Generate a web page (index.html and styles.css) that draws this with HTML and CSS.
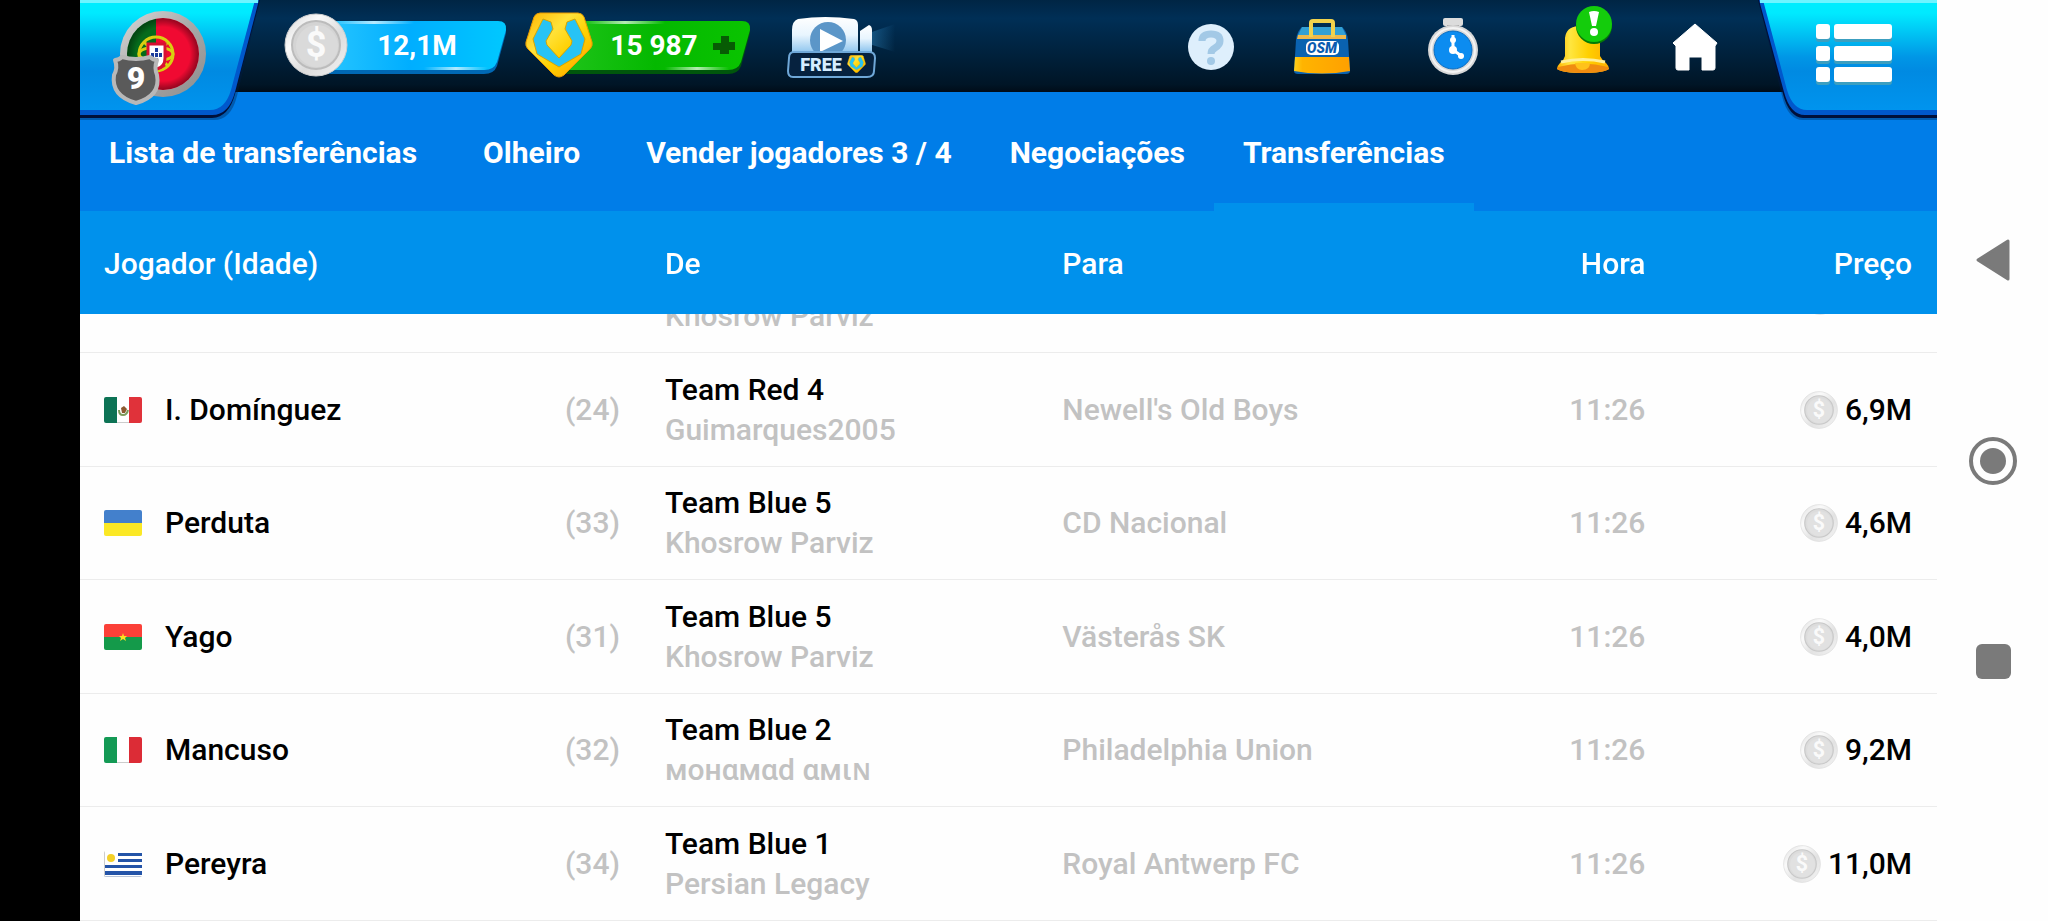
FILE: index.html
```html
<!DOCTYPE html>
<html lang="pt">
<head>
    <meta charset="UTF-8">
    <meta name="viewport" content="width=device-width, initial-scale=1.0">
    <title>Transferências</title>
    <link rel="stylesheet" href="styles.css">
</head>
<body>

    <!-- Gradientes e símbolos partilhados -->
    <svg class="defs" width="0" height="0" aria-hidden="true">
        <defs>
            <linearGradient id="plate" x1="0" y1="0" x2="0" y2="1">
                <stop offset="0" stop-color="#00eeff"/>
                <stop offset="0.12" stop-color="#00eaff"/>
                <stop offset="0.52" stop-color="#0096e6"/>
                <stop offset="0.65" stop-color="#008ae2"/>
                <stop offset="1" stop-color="#0094ee"/>
            </linearGradient>
            <linearGradient id="silver" x1="0" y1="0" x2="1" y2="1">
                <stop offset="0" stop-color="#d8d8d8"/>
                <stop offset="0.5" stop-color="#a8a8a8"/>
                <stop offset="1" stop-color="#8c8c8c"/>
            </linearGradient>
            <linearGradient id="coin-rim" x1="0" y1="0" x2="1" y2="1">
                <stop offset="0" stop-color="#d6d6d6"/>
                <stop offset="0.3" stop-color="#fafafa"/>
                <stop offset="0.6" stop-color="#dcdcdc"/>
                <stop offset="1" stop-color="#f4f4f4"/>
            </linearGradient>
            <linearGradient id="blue-pill" x1="0" y1="0" x2="1" y2="0">
                <stop offset="0" stop-color="#2cc8ff"/>
                <stop offset="0.5" stop-color="#00aeff"/>
                <stop offset="1" stop-color="#00c8ff"/>
            </linearGradient>
            <linearGradient id="green-pill" x1="0" y1="0" x2="1" y2="0">
                <stop offset="0" stop-color="#1fc41a"/>
                <stop offset="0.5" stop-color="#04b800"/>
                <stop offset="1" stop-color="#0ac400"/>
            </linearGradient>
            <linearGradient id="shine" x1="0" y1="0" x2="1" y2="0">
                <stop offset="0" stop-color="#ffffff" stop-opacity="0"/>
                <stop offset="0.5" stop-color="#ffffff" stop-opacity="0.7"/>
                <stop offset="1" stop-color="#ffffff" stop-opacity="0"/>
            </linearGradient>
            <linearGradient id="gold" x1="0" y1="0" x2="1" y2="1">
                <stop offset="0" stop-color="#ffb400"/>
                <stop offset="0.35" stop-color="#ffe23a"/>
                <stop offset="0.6" stop-color="#ffd000"/>
                <stop offset="1" stop-color="#ff9c00"/>
            </linearGradient>
            <linearGradient id="camera" x1="0" y1="0" x2="0" y2="1">
                <stop offset="0" stop-color="#ffffff"/>
                <stop offset="0.5" stop-color="#e8f5fe"/>
                <stop offset="1" stop-color="#8cc4ee"/>
            </linearGradient>
            <linearGradient id="beam" x1="0" y1="0" x2="1" y2="0">
                <stop offset="0" stop-color="#3aa0e0" stop-opacity="0.4"/>
                <stop offset="1" stop-color="#3aa0e0" stop-opacity="0"/>
            </linearGradient>
            <linearGradient id="bag-base" x1="0" y1="0" x2="1" y2="0">
                <stop offset="0" stop-color="#ffcf1a"/>
                <stop offset="0.15" stop-color="#ffb400"/>
                <stop offset="1" stop-color="#ffa000"/>
            </linearGradient>
            <linearGradient id="bell" x1="0" y1="0" x2="1" y2="0">
                <stop offset="0" stop-color="#ffb600"/>
                <stop offset="0.25" stop-color="#ffe640"/>
                <stop offset="0.6" stop-color="#ffd000"/>
                <stop offset="1" stop-color="#ffae00"/>
            </linearGradient>
            <radialGradient id="flag-shade">
                <stop offset="0.75" stop-color="#000000" stop-opacity="0"/>
                <stop offset="1" stop-color="#000000" stop-opacity="0.4"/>
            </radialGradient>
            <clipPath id="crest-clip"><circle cx="83" cy="54" r="36"/></clipPath>
            <clipPath id="flag-clip"><rect width="38" height="26" rx="2"/></clipPath>
        </defs>
        <symbol id="coin" viewBox="0 0 64 64">
            <circle cx="32" cy="32" r="31" fill="url(#coin-rim)" stroke="#cfcfcf"/>
            <circle cx="32" cy="32" r="24" fill="#d4d4d4" stroke="#bcbcbc" stroke-width="2"/>
            <circle cx="33" cy="33" r="21" fill="#dadada"/>
            <text x="32" y="44" class="coin-sign">$</text>
        </symbol>
        <symbol id="club-badge" viewBox="0 0 68 66">
            <path d="M15 1h38q4 0 6 4l8 25q1 4-2 7L39 63q-5 4-10 0L3 37q-3-3-2-7L9 5q2-4 6-4z" fill="url(#gold)" stroke="#e89a00"/>
            <path d="M18 7 26 10 28 17 21 29 22 33 34 46 46 33 47 29 40 17 42 10 50 7 60 27 56 42 34 55 12 42 8 27z" fill="#27c3f5" stroke="#d8a400" stroke-width="1" stroke-linejoin="round"/>
        </symbol>
    </svg>

    <div class="notch"></div>

    <div class="app">
        <header class="topbar">
            <button class="team" aria-label="Equipa">
                <svg width="190" height="126" viewBox="0 0 190 126">
                    <path d="M0 0H180L157 96Q151 120 134 120H0z" fill="#001d45" opacity="0.35"/>
                    <path d="M0 0H180L155 94Q149 117 132 118H0z" fill="#00103a"/>
                    <path d="M0 0H179L155 92Q149 115 132 115H0z" fill="#0058cc"/>
                    <path d="M0 0H175L151 90Q145 110 130 110H0z" fill="url(#plate)"/>
                    <path d="M0 0H178V3H0z" fill="#6ff4ff"/>
                    <circle cx="83" cy="54" r="43" fill="url(#silver)"/>
                    <g clip-path="url(#crest-clip)">
                        <path d="M45 15h31v80H45z" fill="#056b1c"/>
                        <path d="M76 15h50v80H76z" fill="#f00a32"/>
                        <g fill="none" stroke="#d8cf10" stroke-width="3">
                            <circle cx="76" cy="54" r="17"/>
                            <ellipse cx="76" cy="54" rx="17" ry="7"/>
                            <path d="M64 42 88 66M64 66 88 42"/>
                        </g>
                        <path d="M68 44h17v14q0 9-8 11-9-2-9-11z" fill="#fff" stroke="#d81030" stroke-width="3"/>
                        <path d="M75 48h3v4h-3zM71 53h3v4h-3zM75 53h3v4h-3zM79 53h3v4h-3zM75 58h3v4h-3z" fill="#1c3c9c"/>
                        <circle cx="83" cy="54" r="36" fill="url(#flag-shade)"/>
                    </g>
                    <path d="M35 60q4 0 7-3 14 4 28 0 3 3 7 3-3 8 0 15 4 21-21 28-25-7-22-28 4-7 1-15z" fill="#5a5a5a" stroke="#b8b8b8" stroke-width="4" stroke-linejoin="round"/>
                    <text x="56" y="89" class="level">9</text>
                </svg>
            </button>

            <button class="wallet">
                <svg width="224" height="92" viewBox="0 0 224 92">
                    <path d="M30 24H214Q223 24 222 33L213 66Q210 74 200 74H30z" fill="#0068b4"/>
                    <path d="M30 21H214Q223 21 222 30L213 62Q210 70 200 70H30z" fill="url(#blue-pill)"/>
                    <rect x="50" y="21" width="80" height="3" fill="url(#shine)"/>
                    <rect x="140" y="67" width="64" height="3" fill="url(#shine)"/>
                    <use href="#coin" x="0" y="13" width="64" height="64"/>
                    <text x="133" y="55" class="amount">12,1M</text>
                </svg>
            </button>

            <button class="wallet clubs">
                <svg width="226" height="92" viewBox="0 0 226 92">
                    <path d="M36 24H217Q226 24 225 33L216 66Q213 74 203 74H36z" fill="#00560c"/>
                    <path d="M36 21H217Q226 21 225 30L216 62Q213 70 203 70H36z" fill="url(#green-pill)"/>
                    <rect x="60" y="21" width="80" height="3" fill="url(#shine)"/>
                    <rect x="140" y="67" width="64" height="3" fill="url(#shine)"/>
                    <use href="#club-badge" x="0" y="12" width="68" height="66"/>
                    <text x="129" y="55" class="amount">15 987</text>
                    <path d="M196 36h8v6h6v8h-6v4h-9v-4h-7v-7h8z" fill="#075c04"/>
                </svg>
            </button>

            <button class="video" aria-label="Vídeo">
                <svg width="112" height="92" viewBox="0 0 112 92">
                    <path d="M82 33 108 24v28L82 44z" fill="url(#beam)"/>
                    <path d="M11 19Q38 15 67 19q4 1 4 6v28H5V30q0-9 6-11z" fill="url(#camera)"/>
                    <path d="M73 31 82 25Q85 26 85 30V52H73z" fill="url(#camera)"/>
                    <circle cx="41" cy="40" r="18" fill="#5b96c8"/>
                    <path d="M33 29 56 41 33 52z" fill="#fff"/>
                    <path d="M7 52H82q6 0 6 6l-1 13q0 6-7 6H6q-5 0-5-6l1-13q0-6 5-6z" fill="#06223f" stroke="#6fa8d8" stroke-width="2"/>
                    <text x="34" y="71" class="free">FREE</text>
                    <use href="#club-badge" x="60" y="55" width="19" height="18"/>
                </svg>
            </button>

            <div class="shortcuts">
                <button aria-label="Ajuda">
                    <svg width="46" height="92" viewBox="0 0 46 92">
                        <circle cx="23" cy="47" r="23" fill="#deeffc"/>
                        <path d="M14 41q0-7 9-7 9 0 9 7 0 4-5 7-4 2-4 6" fill="none" stroke="#a3c9e6" stroke-width="7"/>
                        <circle cx="23" cy="61" r="4" fill="#a3c9e6"/>
                    </svg>
                </button>
                <button aria-label="Loja">
                    <svg width="56" height="92" viewBox="0 0 56 92">
                        <path d="M8 27H48Q53 31 54 40L56 71Q56 74 52 74H4Q0 74 0 71L2 40Q3 31 8 27z" fill="#0a62b0"/>
                        <path d="M8 27H48l4 8H4z" fill="#32a0d4"/>
                        <path d="M4 35H52v4H3z" fill="#eeb84c"/>
                        <path d="M1 57H55L56 71Q28 76 0 71z" fill="url(#bag-base)"/>
                        <path d="M17 37V23q0-2 2-2H37q2 0 2 2V37" fill="none" stroke="#f2d24c" stroke-width="4"/>
                        <rect x="12" y="41" width="33" height="14" rx="5" fill="#fff"/>
                        <text x="28" y="53" class="osm">OSM</text>
                    </svg>
                </button>
                <button class="timer" aria-label="Treino">
                    <svg width="52" height="92" viewBox="0 0 52 92">
                        <rect x="16" y="18" width="20" height="8" rx="2" fill="#dcdcdc"/>
                        <path d="M20 25h12v4H20z" fill="#9c9c9c"/>
                        <circle cx="26" cy="50" r="25" fill="#d8d8d8"/>
                        <circle cx="26" cy="50" r="22" fill="none" stroke="#f4f4f4" stroke-width="2"/>
                        <circle cx="26" cy="50" r="19" fill="#0c8cf0" stroke="#0a6cc0"/>
                        <path d="M26 35V50L36 57" fill="none" stroke="#fff" stroke-width="3"/>
                        <circle cx="26" cy="50" r="4" fill="#fff"/>
                        <circle cx="26" cy="40" r="3" fill="#fff"/>
                        <circle cx="34" cy="56" r="3" fill="#fff"/>
                    </svg>
                </button>
                <button aria-label="Notificações">
                    <svg width="56" height="92" viewBox="0 0 56 92">
                        <path d="M9 56V38Q10 27 22 26 44 25 44 40V56q2 4 6 7 3 3 3 6-6 4-26 4T1 69q0-3 3-6 4-3 5-7z" fill="url(#bell)"/>
                        <path d="M2 67q25-7 50 0l1 2q-6 4-26 4T1 69z" fill="#f08c10"/>
                        <path d="M19 63h15q0 7-8 7-6 0-7-7z" fill="#ffc21a"/>
                        <path d="M5 62q22-5 44 0" fill="none" stroke="#fff09a" stroke-width="3"/>
                        <circle cx="38" cy="26" r="18" fill="#047a06"/>
                        <circle cx="38" cy="24" r="18" fill="#14cc0c"/>
                        <path d="M33 12q5-2 10 0l-3 14h-4z" fill="#fff"/>
                        <circle cx="38" cy="32" r="4" fill="#fff"/>
                    </svg>
                </button>
                <button aria-label="Início">
                    <svg width="46" height="92" viewBox="0 0 46 92">
                        <path d="M23 24 45 43 43 46V68q0 2-2 2H30V57H17V70H6q-2 0-2-2V46L1 43z" fill="#fff" stroke="#fff" stroke-linejoin="round"/>
                    </svg>
                </button>
            </div>

            <button class="menu" aria-label="Menu">
                <svg width="179" height="126" viewBox="0 0 179 126">
                    <path d="M0 0H179V120H45Q30 120 24 96z" fill="#001d45" opacity="0.35"/>
                    <path d="M0 0H179V118H45Q31 117 25 94z" fill="#00103a"/>
                    <path d="M1 0H179V115H47Q32 115 26 92z" fill="#0058cc"/>
                    <path d="M5 0H179V110H49Q35 110 29 90z" fill="url(#plate)"/>
                    <path d="M2 0H179V3H2z" fill="#6ff4ff"/>
                    <g fill="#3c9fc0">
                        <rect x="58" y="27" width="14" height="15" rx="3"/><rect x="76" y="27" width="58" height="15" rx="3"/>
                        <rect x="58" y="49" width="14" height="15" rx="3"/><rect x="76" y="49" width="58" height="15" rx="3"/>
                        <rect x="58" y="70" width="14" height="15" rx="3"/><rect x="76" y="70" width="58" height="15" rx="3"/>
                    </g>
                    <g fill="#fff">
                        <rect x="58" y="24" width="14" height="15" rx="3"/><rect x="76" y="24" width="58" height="15" rx="3"/>
                        <rect x="58" y="46" width="14" height="15" rx="3"/><rect x="76" y="46" width="58" height="15" rx="3"/>
                        <rect x="58" y="67" width="14" height="15" rx="3"/><rect x="76" y="67" width="58" height="15" rx="3"/>
                    </g>
                </svg>
            </button>
        </header>

        <nav class="tabs">
            <a href="#lista" class="tab tab-wide">Lista de transferências</a>
            <a href="#olheiro" class="tab tab-wide">Olheiro</a>
            <a href="#vender" class="tab">Vender jogadores 3 / 4</a>
            <a href="#negociacoes" class="tab">Negociações</a>
            <a href="#transferencias" class="tab active">Transferências</a>
        </nav>

        <main class="lista" id="lista-transferencias">
            <table>
                <thead>
                    <tr>
                        <th class="col-jogador">Jogador (Idade)</th>
                        <th class="col-equipa">De</th>
                        <th class="col-equipa">Para</th>
                        <th class="col-hora">Hora</th>
                        <th class="col-preco">Preço</th>
                    </tr>
                </thead>
                <tbody>
                    <tr>
                        <td></td>
                        <td><br><div class="muted">Khosrow Parviz</div></td>
                        <td></td>
                        <td></td>
                        <td class="col-preco"><div class="preco"><svg class="coin" width="38" height="38"><use href="#coin"/></svg><span class="sem-valor"></span></div></td>
                    </tr>
                    <tr>
                        <td>
                            <div class="jogador">
                                <svg class="flag" width="38" height="26" viewBox="0 0 38 26"><g clip-path="url(#flag-clip)"><path d="M0 0h13v26H0z" fill="#0d7355"/><path d="M13 0h12v26H13z" fill="#fff"/><path d="M13 25h12v1H13z" fill="#ccc"/><path d="M25 0h13v26H25z" fill="#e0323a"/><path d="M15 13q0 5 4 5t5-5" fill="none" stroke="#7c9c5c" stroke-width="2"/><path d="M17 11l3-2 3 3-2 4h-3z" fill="#8c5a30"/></g></svg>
                                I. Domínguez <span class="idade">(24)</span>
                            </div>
                        </td>
                        <td>Team Red 4<div class="muted">Guimarques2005</div></td>
                        <td class="muted">Newell's Old Boys</td>
                        <td class="col-hora muted">11:26</td>
                        <td class="col-preco"><div class="preco"><svg class="coin" width="38" height="38"><use href="#coin"/></svg>6,9M</div></td>
                    </tr>
                    <tr>
                        <td>
                            <div class="jogador">
                                <svg class="flag" width="38" height="26" viewBox="0 0 38 26"><g clip-path="url(#flag-clip)"><path d="M0 0h38v13H0z" fill="#4380cc"/><path d="M0 13h38v13H0z" fill="#fbe825"/></g></svg>
                                Perduta <span class="idade">(33)</span>
                            </div>
                        </td>
                        <td>Team Blue 5<div class="muted">Khosrow Parviz</div></td>
                        <td class="muted">CD Nacional</td>
                        <td class="col-hora muted">11:26</td>
                        <td class="col-preco"><div class="preco"><svg class="coin" width="38" height="38"><use href="#coin"/></svg>4,6M</div></td>
                    </tr>
                    <tr>
                        <td>
                            <div class="jogador">
                                <svg class="flag" width="38" height="26" viewBox="0 0 38 26"><g clip-path="url(#flag-clip)"><path d="M0 0h38v13H0z" fill="#fb4038"/><path d="M0 13h38v13H0z" fill="#149a4a"/><path d="M19 9l1 3h3l-2 2 1 3-3-2-3 2 1-3-2-2h3z" fill="#fce020"/></g></svg>
                                Yago <span class="idade">(31)</span>
                            </div>
                        </td>
                        <td>Team Blue 5<div class="muted">Khosrow Parviz</div></td>
                        <td class="muted">Västerås SK</td>
                        <td class="col-hora muted">11:26</td>
                        <td class="col-preco"><div class="preco"><svg class="coin" width="38" height="38"><use href="#coin"/></svg>4,0M</div></td>
                    </tr>
                    <tr>
                        <td>
                            <div class="jogador">
                                <svg class="flag" width="38" height="26" viewBox="0 0 38 26"><g clip-path="url(#flag-clip)"><path d="M0 0h13v26H0z" fill="#149a55"/><path d="M13 0h12v26H13z" fill="#fff"/><path d="M13 25h12v1H13z" fill="#ccc"/><path d="M25 0h13v26H25z" fill="#dc2c36"/></g></svg>
                                Mancuso <span class="idade">(32)</span>
                            </div>
                        </td>
                        <td>Team Blue 2<div class="muted">мoнαмαd αмιɴ</div></td>
                        <td class="muted">Philadelphia Union</td>
                        <td class="col-hora muted">11:26</td>
                        <td class="col-preco"><div class="preco"><svg class="coin" width="38" height="38"><use href="#coin"/></svg>9,2M</div></td>
                    </tr>
                    <tr>
                        <td>
                            <div class="jogador">
                                <svg class="flag" width="38" height="26" viewBox="0 0 38 26"><g clip-path="url(#flag-clip)"><path d="M0 0h38v26H0z" fill="#fff"/><path d="M14 2h24v3H14zM14 8h24v3H14zM0 14h38v3H0zM0 20h38v4H0z" fill="#2454a8"/><path d="M0 25h38v1H0z" fill="#b8c4d8"/><path d="M0 0h1v26H0z" fill="#ccc"/><circle cx="7" cy="7" r="4" fill="#f4d028"/></g></svg>
                                Pereyra <span class="idade">(34)</span>
                            </div>
                        </td>
                        <td>Team Blue 1<div class="muted">Persian Legacy</div></td>
                        <td class="muted">Royal Antwerp FC</td>
                        <td class="col-hora muted">11:26</td>
                        <td class="col-preco"><div class="preco"><svg class="coin" width="38" height="38"><use href="#coin"/></svg>11,0M</div></td>
                    </tr>
                </tbody>
            </table>
        </main>
    </div>

    <div class="system-bar">
        <button aria-label="Voltar">
            <svg width="48" height="48" viewBox="0 0 48 48"><path d="M9 24 39 5V43z" fill="#7a7a7a" stroke="#7a7a7a" stroke-width="3" stroke-linejoin="round"/></svg>
        </button>
        <button aria-label="Ecrã principal">
            <svg width="48" height="48" viewBox="0 0 48 48"><circle cx="24" cy="24" r="22" fill="none" stroke="#7a7a7a" stroke-width="4"/><circle cx="24" cy="24" r="13" fill="#7a7a7a"/></svg>
        </button>
        <button aria-label="Recentes">
            <svg width="48" height="48" viewBox="0 0 48 48"><rect x="7" y="6" width="35" height="35" rx="6" fill="#7a7a7a"/></svg>
        </button>
    </div>

    <script>
        // abre a lista nas transferências mais antigas
        const lista = document.getElementById('lista-transferencias');
        lista.scrollTop = lista.scrollHeight;
    </script>

</body>
</html>
```
FILE: styles.css
```css
* {
    box-sizing: border-box;
}

body {
    margin: 0;
    display: flex;
    height: 100vh;
    overflow: hidden;
    background-color: #fefefe;
    font-family: Roboto, "Noto Sans", sans-serif;
    font-size: 30px;
    font-weight: 500;
    color: #000;
}

button {
    padding: 0;
    border: none;
    background: none;
    cursor: pointer;
}

svg {
    display: block;
    flex-shrink: 0;
}

.defs {
    position: absolute;
}

.notch {
    width: 80px;
    background-color: #000;
}

.app {
    flex: 1;
    min-width: 0;
    display: flex;
    flex-direction: column;
}

/* Barra superior */
.topbar {
    display: flex;
    align-items: flex-start;
    height: 92px;
    flex-shrink: 0;
    background: linear-gradient(#002544, #002f56 20%, #001f38 65%, #001526 92%, #000c18);
}

/* as abas laterais passam por cima do menu */
.team,
.menu {
    position: relative;
    z-index: 3;
}

.wallet {
    margin-left: 14px;
}

.clubs {
    margin-left: 17px;
}

.video {
    margin-left: 36px;
}

.shortcuts {
    display: flex;
    gap: 60px;
    margin-left: auto;
    margin-right: 40px;
}

.timer {
    margin: 0 17px;
}

.amount,
.level,
.free,
.osm,
.coin-sign {
    font-family: Roboto, sans-serif;
    font-weight: 700;
    text-anchor: middle;
    fill: #fff;
}

.amount {
    font-size: 28px;
}

.level {
    font-size: 32px;
    font-weight: 900;
}

.free {
    font-size: 18px;
    font-weight: 900;
    fill: #d4ecff;
}

.osm {
    font-size: 14px;
    font-weight: 900;
    font-style: italic;
    fill: #0a5cb0;
}

.coin-sign {
    font-size: 36px;
    fill: #fafafa;
}

/* Separadores */
.tabs {
    display: flex;
    height: 119px;
    flex-shrink: 0;
    background-color: #007de8;
}

.tab {
    display: flex;
    align-items: center;
    padding: 10px 29px 0;
    border-bottom: 8px solid transparent;
    color: #fff;
    font-weight: 700;
    text-decoration: none;
    white-space: nowrap;
}

.tab-wide {
    margin-right: 8px;
}

.active {
    border-bottom-color: #0091ec;
}

/* Tabela */
.lista {
    flex: 1;
    min-height: 0;
    overflow-y: auto;
    scrollbar-width: none;
}

table {
    width: 100%;
    table-layout: fixed;
    border-spacing: 0;
}

th {
    position: sticky;
    top: 0;
    z-index: 1;
    height: 103px;
    padding: 2px 0 0;
    background-color: #0091ec;
    color: #fff;
    font-weight: 500;
    text-align: left;
}

td {
    height: 113px;
    padding: 0;
    border-bottom: 1px solid #ececec;
    line-height: 40px;
}

tr:nth-child(even) td {
    height: 114px;
}

.muted,
.idade {
    color: #c2c2c2;
}

.col-jogador {
    width: 31.5%;
    padding-left: 24px;
}

.col-equipa {
    width: 21.4%;
}

.col-hora {
    width: 10%;
    text-align: right;
}

.col-preco {
    padding-right: 25px;
    text-align: right;
}

.jogador {
    display: flex;
    align-items: center;
    padding: 0 45px 0 24px;
}

.flag {
    margin-right: 23px;
}

.idade {
    margin-left: auto;
}

.preco {
    display: flex;
    align-items: center;
    justify-content: flex-end;
    gap: 7px;
}

.coin {
    opacity: 0.8;
}

.sem-valor {
    width: 66px;
}

/* Botões do sistema */
.system-bar {
    width: 111px;
    display: flex;
    flex-direction: column;
    align-items: center;
    justify-content: center;
    gap: 153px;
}
```
